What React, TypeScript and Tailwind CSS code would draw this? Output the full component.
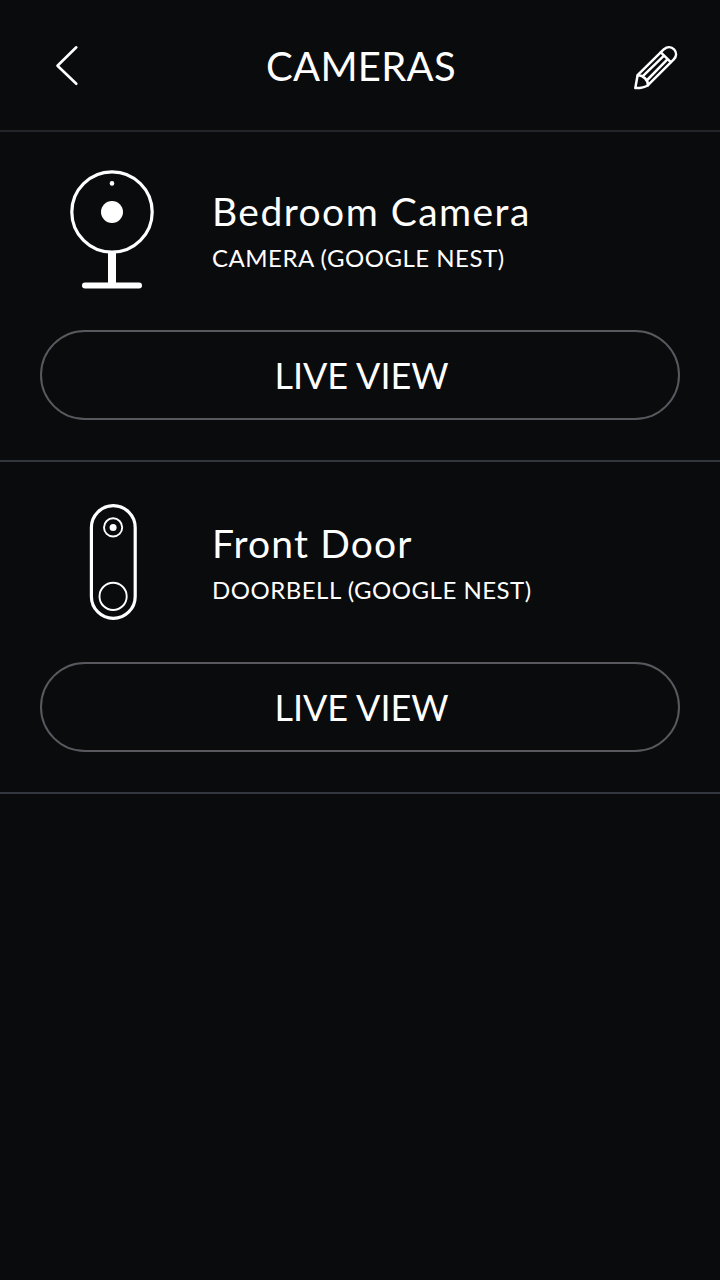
import { clsx } from "clsx";

type DeviceKind = "camera" | "doorbell";

interface Device {
  id: string;
  kind: DeviceKind;
  name: string;
  model: string;
  nameClass: string;
}

const DEVICES: Device[] = [
  {
    id: "bedroom",
    kind: "camera",
    name: "Bedroom Camera",
    model: "CAMERA (GOOGLE NEST)",
    nameClass: "tracking-[1.45px]",
  },
  {
    id: "front-door",
    kind: "doorbell",
    name: "Front Door",
    model: "DOORBELL (GOOGLE NEST)",
    nameClass: "tracking-[1.15px]",
  },
];

function BackIcon() {
  return (
    <svg width="60" height="60" viewBox="36 35 60 60" fill="none" stroke="white" strokeWidth="2.6" strokeLinecap="round" strokeLinejoin="round">
      <path d="M76.3 47.3 57.5 65.8 76.3 83.8" />
    </svg>
  );
}

function PencilIcon() {
  return (
    <svg width="60" height="60" viewBox="626 35 60 60" fill="none" stroke="white" strokeWidth="2.5" strokeLinecap="round" strokeLinejoin="round">
      <path d="M635.3 88.1 637.6 75.2 664 49.2C667.4 46.3 671.4 46.6 674.2 49.5 676.8 52.4 676.7 56.4 673.8 59.3L648 85.2C644.4 87.6 640.2 88.2 635.3 88.1Z" />
      <path d="M660.8 52.4 670.8 62.2M637.8 75.4C642.9 75 648.3 80.2 648 85.2M642.6 76.4 664 55.6M647.2 80 667.6 59.2" />
    </svg>
  );
}

function CameraIcon() {
  return (
    <svg width="100" height="130" viewBox="62 165 100 130" fill="none" stroke="white">
      <circle cx="112" cy="212" r="40.2" strokeWidth="3.2" />
      <circle cx="112" cy="212" r="11" fill="white" stroke="none" />
      <circle cx="112" cy="183.4" r="2.3" fill="white" stroke="none" />
      <path d="M112 252V284" strokeWidth="8" />
      <path d="M85 285.5H139" strokeWidth="6" strokeLinecap="round" />
    </svg>
  );
}

function DoorbellIcon() {
  return (
    <svg width="100" height="130" viewBox="62 497 100 130" fill="none" stroke="white">
      <rect x="91.4" y="505.6" width="43.8" height="112.8" rx="21.9" strokeWidth="3.2" />
      <circle cx="113.1" cy="527.4" r="9.1" strokeWidth="1.9" />
      <circle cx="113.1" cy="527.4" r="3.5" fill="white" stroke="none" />
      <circle cx="113.1" cy="596.4" r="13.6" strokeWidth="1.9" />
    </svg>
  );
}

function DeviceCard({ device }: { device: Device }) {
  return (
    <li className="flex h-[332px] flex-col border-b-2 border-[#32373d] px-10 pt-[35px]">
      <div className="flex h-[130px] pl-[22px]">
        {device.kind === "camera" ? <CameraIcon /> : <DoorbellIcon />}
        <div className="ml-[50px] pt-[22px] whitespace-nowrap">
          <h2 className={clsx("text-[39px] leading-12", device.nameClass)}>{device.name}</h2>
          <p className="mt-[7px] text-2xl leading-8 tracking-[0.5px]">{device.model}</p>
        </div>
      </div>
      <button className="mt-[35px] flex h-[90px] w-full items-center justify-center rounded-full border-2 border-[#58585e] pl-[3px] text-[36px] leading-none">
        LIVE VIEW
      </button>
    </li>
  );
}

export default function App() {
  return (
    <main className="min-h-screen w-[720px] bg-[#0a0b0d] font-['Lato',sans-serif] text-white">
      {/* The divider overlaps the first card by its own thickness */}
      <header className="-mb-0.5 flex h-[132px] items-center justify-between border-b-2 border-[#22262b] pr-[34px] pl-9">
        <button aria-label="Back">
          <BackIcon />
        </button>
        <h1 className="pt-0.5 text-[40px] leading-none tracking-[0.3px]">CAMERAS</h1>
        <button aria-label="Edit cameras">
          <PencilIcon />
        </button>
      </header>

      <ul>
        {DEVICES.map((device) => (
          <DeviceCard key={device.id} device={device} />
        ))}
      </ul>
    </main>
  );
}
